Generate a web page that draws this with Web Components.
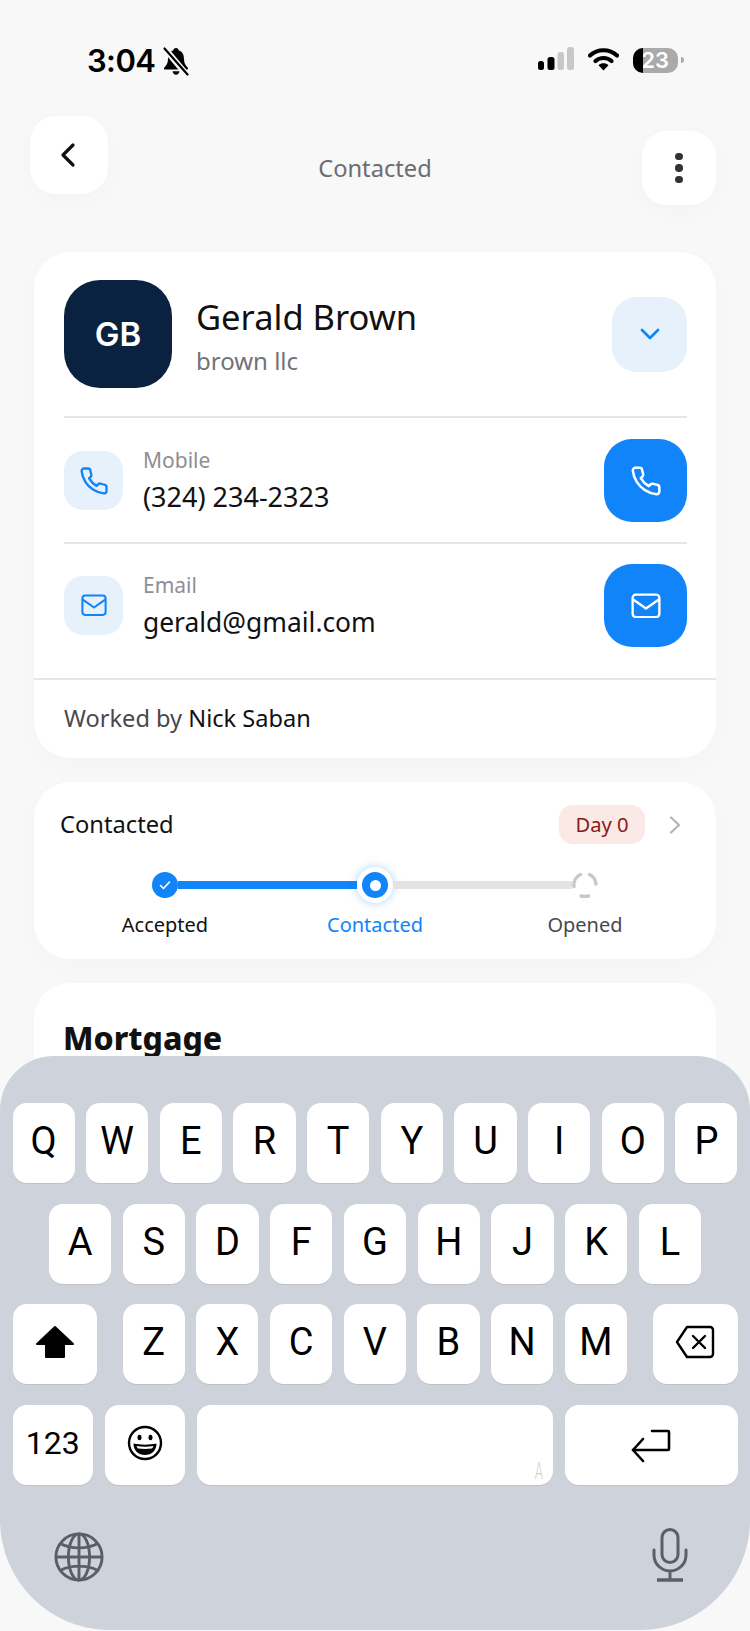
<!DOCTYPE html>
<html lang="en"><head><meta charset="utf-8"><title>Contacted</title>
<style>
html,body{margin:0;padding:0;background:#f8f8f8}
body{width:750px;height:1631px;overflow:hidden;font-family:"Noto Sans","Liberation Sans",sans-serif}
</style></head><body>
<app-screen>
  <status-bar></status-bar>
  <nav-header title="Contacted"></nav-header>
  <contact-card name="Gerald Brown" company="brown llc" initials="GB" worker="Nick Saban"></contact-card>
  <pipeline-card title="Contacted" day="Day 0"></pipeline-card>
  <mortgage-card slot="tail">Mortgage</mortgage-card>
  <ios-keyboard slot="keyboard"></ios-keyboard>
</app-screen>
<script>
const PHONE='<path d="M22 16.92v3a2 2 0 0 1-2.18 2 19.79 19.79 0 0 1-8.63-3.07 19.5 19.5 0 0 1-6-6 19.79 19.79 0 0 1-3.07-8.67A2 2 0 0 1 4.11 2h3a2 2 0 0 1 2 1.72 12.84 12.84 0 0 0 .7 2.81 2 2 0 0 1-.45 2.11L8.09 9.91a16 16 0 0 0 6 6l1.27-1.27a2 2 0 0 1 2.11-.45 12.84 12.84 0 0 0 2.81.7A2 2 0 0 1 22 16.92z"/>';
const MAIL='<rect x="1.500" y="1.500" width="25" height="21" rx="3"/><path d="M2 6l12 8.500L26 6"/>';
const def=(n,fn)=>customElements.define(n,class extends HTMLElement{
  connectedCallback(){ if(this.shadowRoot) return; this.attachShadow({mode:'open'}).innerHTML=fn(this); }
});

def('app-screen',()=>`<style>
:host{display:block;width:750px;height:1631px;overflow:hidden;background:#f8f8f8}
.scroll{height:1116px;overflow:hidden}
.kb{position:relative;margin-top:-60px}
</style>
<div class="scroll"><slot></slot><slot name="tail"></slot></div>
<div class="kb"><slot name="keyboard"></slot></div>`);

def('status-bar',()=>`<style>
:host{display:flex;align-items:flex-start;height:116px;box-sizing:border-box;padding:47px 66px 0 87px;color:#000}
.t{font:600 31px/28px Inter,sans-serif;letter-spacing:-.6px}
.bell{margin:0 0 0 8px}
.r{margin-left:auto;display:flex;align-items:flex-start}
.bat{position:relative;width:45px;height:25px;margin:1px 0 0 14px;border-radius:10px;background:#aaa;display:flex;align-items:center;justify-content:flex-end;box-sizing:border-box;padding-right:9px;color:#fff;font:600 22px/25px Inter,sans-serif}
.bat i{position:absolute;left:0;top:0;bottom:0;width:10px;background:#000;border-radius:10px 0 0 10px}
.nub{width:3px;height:6px;margin:10px 0 0 3px;background:#aaa;border-radius:0 3px 3px 0}
svg{display:block}
</style>
<div class="t">3:04</div>
<svg class="bell" width="26" height="29" viewBox="0 0 26 29"><path fill="#000" d="M13 1c1.600 0 2.600 1 2.800 2.400C19.800 4.600 21 8 21 12c0 4 1.500 6.400 3.600 8.400.9.900.3 2.100-1 2.100H2.400c-1.300 0-1.900-1.200-1-2.100C3.500 18.400 5 16 5 12c0-4 1.200-7.400 5.200-8.600C10.400 2 11.400 1 13 1z"/><path fill="#000" d="M9.500 24.200h7c-.4 2.100-1.800 3.600-3.500 3.600s-3.100-1.500-3.500-3.600z"/><path d="M3 3l20 24" stroke="#f8f8f8" stroke-width="6"/><path d="M1.500 1.500l23 26" stroke="#000" stroke-width="2.200" stroke-linecap="round"/></svg>
<div class="r">
<svg width="37" height="24" viewBox="0 0 37 24"><rect x="1" y="14" width="6" height="9" rx="2.500" fill="#000"/><rect x="10.500" y="10" width="7" height="13" rx="2.500" fill="#000"/><rect x="20.500" y="5" width="6.500" height="18" rx="2.500" fill="#c8c8c8"/><rect x="30" y="0" width="7" height="23" rx="2.500" fill="#c8c8c8"/></svg>
<svg style="margin-left:14px" width="31" height="24" viewBox="0 0 31 24"><path d="M2 8.500C9.500 1.500 21.500 1.500 29 8.500" fill="none" stroke="#000" stroke-width="4.200" stroke-linecap="round"/><path d="M7.500 14c4.500-4 11.500-4 16 0" fill="none" stroke="#000" stroke-width="4.200" stroke-linecap="round"/><path d="M10.500 18.200c3-2.600 7-2.600 10 0L15.500 23.500z" fill="#000"/></svg>
<div class="bat"><i></i>23</div><div class="nub"></div>
</div>`);

def('nav-header',el=>`<style>
:host{display:flex;align-items:flex-start;height:136px;box-sizing:border-box;padding:0 34px 0 30px}
.b{background:#fff;display:flex;align-items:center;justify-content:center;box-shadow:0 6px 24px rgba(0,0,0,.025);flex:none}
.back{width:78px;height:78px;border-radius:26px}
.more{width:74px;height:74px;border-radius:25px;margin-top:15px;gap:4px;flex-direction:column}
.more i{width:7.500px;height:7.500px;border-radius:50%;background:#333}
.t{flex:1;text-align:center;font-size:23.700px;line-height:30px;margin-top:37px;color:#6c6c73}
svg{display:block;transform:translateX(-1px)}
</style>
<div class="b back"><svg width="18" height="26" viewBox="0 0 18 26" fill="none" stroke="#111" stroke-width="3.200" stroke-linecap="round" stroke-linejoin="round"><path d="M14 3L4 13l10 10"/></svg></div>
<div class="t">${el.getAttribute('title')}</div>
<div class="b more"><i></i><i></i><i></i></div>`);

def('contact-row',el=>{const m=el.getAttribute('icon')==='mail',ic=m?MAIL:PHONE,vb=m?'0 0 28 24':'0 0 24 24';
return `<style>
:host{display:flex;align-items:center;padding:0 29px 0 30px}
.box{width:59px;height:59px;border-radius:19px;background:#e7f1fc;display:flex;align-items:center;justify-content:center;color:#1084f8;flex:none}
.tx{margin-left:20px;flex:1;padding-top:1px}
.l{font-size:21px;line-height:26px;color:#8e8e93}
.v{font-size:${m?26.400:27}px;line-height:36px;color:#111;margin-top:6px}
.btn{width:83px;height:83px;border-radius:28px;background:#1084f8;display:flex;align-items:center;justify-content:center;color:#fff;flex:none}
svg{display:block;fill:none;stroke:currentColor;stroke-width:${m?2.200:1.900};stroke-linejoin:round;stroke-linecap:round}
</style>
<div class="box"><svg width="${m?26:30}" height="${m?22.300:30}" viewBox="${vb}">${ic}</svg></div>
<div class="tx"><div class="l">${el.getAttribute('label')}</div><div class="v">${el.getAttribute('value')}</div></div>
<div class="btn"><svg width="${m?30:32}" height="${m?25.700:32}" viewBox="${vb}">${ic}</svg></div>`});

def('contact-card',el=>`<style>
:host{display:block;margin:0 34px;height:506px;background:#fff;border-radius:36px;box-shadow:0 8px 30px rgba(0,0,0,.02);overflow:hidden}
.head{display:flex;align-items:center;padding:28px 29px 28px 30px}
.av{width:108px;height:108px;border-radius:36px;background:#0a2240;color:#fff;display:flex;align-items:center;justify-content:center;font:600 33px/1 Inter,sans-serif;flex:none;padding-top:1px;box-sizing:border-box}
.n{margin:15px 0 0 25px;flex:1;align-self:flex-start}
.name{font-size:34.500px;line-height:44px;color:#111;margin-left:-1px}
.co{font-size:24px;line-height:30px;color:#727278;margin:7px 0 0 -1px}
.chev{width:75px;height:75px;border-radius:25px;background:#e7f1fc;display:flex;align-items:center;justify-content:center}
hr{border:0;height:2px;background:#e6e6e6;margin:0 29px 0 30px}
hr.full{margin:0}
.r1{padding:21px 0 20px}
.r2{padding:20px 0 31px}
.foot{padding:24px 30px 28px;font-size:23.600px;line-height:28px;color:#48484d}
.foot b{font-weight:400;color:#111}
svg{display:block}
</style>
<div class="head"><div class="av">${el.getAttribute('initials')}</div>
<div class="n"><div class="name">${el.getAttribute('name')}</div><div class="co">${el.getAttribute('company')}</div></div>
<div class="chev"><svg width="24" height="16" viewBox="0 0 24 16" fill="none" stroke="#1084f8" stroke-width="2.700" stroke-linecap="round" stroke-linejoin="round"><path d="M4 4l8 8 8-8"/></svg></div></div>
<hr>
<div class="r1"><contact-row icon="phone" label="Mobile" value="(324) 234-2323"></contact-row></div>
<hr>
<div class="r2"><contact-row icon="mail" label="Email" value="gerald@gmail.com"></contact-row></div>
<hr class="full">
<div class="foot">Worked by <b>${el.getAttribute('worker')}</b></div>`);

def('pipeline-step',el=>{const s=el.getAttribute('state');
const col={done:['transparent','#1084f8'],active:['#1084f8','#e3e3e3'],todo:['#e3e3e3','transparent']}[s];
const dot={
done:`<div class="dot"><svg width="26" height="26" viewBox="0 0 26 26"><circle cx="13" cy="13" r="13" fill="#1084f8"/><path d="M8.500 13.500l3 3L17.500 10" fill="none" stroke="#fff" stroke-width="1.600" stroke-linecap="round" stroke-linejoin="round"/></svg></div>`,
active:`<div class="act"><i></i></div>`,
todo:`<div class="dot"><svg width="26" height="26" viewBox="0 0 26 26" fill="none" stroke="#c8c8c8" stroke-width="3.400" stroke-linecap="round"><path d="M2 14.500A11.500 11.500 0 0 1 8.500 2.500"/><path d="M17.500 2.500A11.500 11.500 0 0 1 24 12"/><path d="M9 24c2.500.5 5 .5 7.500 0"/></svg></div>`}[s];
return `<style>
:host{display:block;flex:1}
.track{display:flex;align-items:center;height:36px}
.track b{flex:1;height:8px;display:block}
.dot{width:26px;height:26px;flex:none}
.act{width:36px;height:36px;box-sizing:border-box;border-radius:50%;background:#1084f8;border:5px solid #fff;box-shadow:0 0 10px rgba(16,132,248,.35);display:flex;align-items:center;justify-content:center;flex:none}
.act i{width:11px;height:11px;background:#fff;border-radius:50%;display:block}
svg{display:block}
.lb{margin-top:9px;text-align:center;font-size:20px;line-height:26px;color:${{done:'#111',active:'#1084f8',todo:'#48484d'}[s]}}
</style>
<div class="track"><b style="background:${col[0]}"></b>${dot}<b style="background:${col[1]}"></b></div>
<div class="lb">${el.getAttribute('label')}</div>`});

def('pipeline-card',el=>`<style>
:host{display:block;margin:24px 34px 0;height:177px;box-sizing:border-box;padding:23px 26px 0;background:#fff;border-radius:36px;box-shadow:0 8px 30px rgba(0,0,0,.02)}
.h{display:flex;align-items:center;height:39px}
.t{flex:1;font-size:23.700px;color:#111;margin-top:-2px}
.d{width:86px;height:39px;border-radius:14px;background:#fbe9e6;color:#8b1a1a;font-size:20.200px;line-height:38px;text-align:center}
svg{display:block;margin:0 9px 0 24px}
.s{display:flex;margin-top:23px}
</style>
<div class="h"><div class="t">${el.getAttribute('title')}</div><div class="d">${el.getAttribute('day')}</div>
<svg width="12" height="18" viewBox="0 0 12 18" fill="none" stroke="#b4b4b4" stroke-width="2.200" stroke-linecap="round" stroke-linejoin="round"><path d="M2 1.500L10 9l-8 7.500"/></svg></div>
<div class="s"><pipeline-step state="done" label="Accepted"></pipeline-step><pipeline-step state="active" label="Contacted"></pipeline-step><pipeline-step state="todo" label="Opened"></pipeline-step></div>`);

def('mortgage-card',()=>`<style>
:host{display:block;margin:24px 34px 0;height:200px;box-sizing:border-box;padding:35px 29px;background:#fff;border-radius:36px 36px 0 0}
div{font-size:32px;font-weight:800;line-height:40px;color:#111}
</style><div><slot></slot></div>`);

def('kb-key',el=>`<style>
:host{display:flex;align-items:center;justify-content:center;height:80px;background:#fff;border-radius:14px;box-shadow:0 1px 0 rgba(0,0,0,.08);color:#000;font:400 38px/1 Roboto,sans-serif;padding-bottom:4px;box-sizing:border-box;position:relative;flex:${el.getAttribute('w')?'none':'1'};width:${el.getAttribute('w')||'auto'};min-width:0}
</style><slot></slot>`);

const row=s=>[...s].map(c=>`<kb-key>${c}</kb-key>`).join('');
def('ios-keyboard',()=>`<style>
:host{display:block;height:574px;box-sizing:border-box;background:#ced2da;padding-top:47px;border-radius:54px 54px 110px 110px}
.r{display:flex;gap:11.600px;padding:0 12.500px;margin-bottom:20.700px}
.r2{padding:0 49px}
.sp{position:absolute;right:10px;bottom:2px;font:300 24px/24px Roboto,sans-serif;color:#cfcfcf;transform:scaleX(.55);transform-origin:right}
.s3{margin-right:14px}
.d3{margin-left:14px}
.kk{font-size:32px}
.b{display:flex;justify-content:space-between;padding:22px 62px 0 54px}
svg{display:block}
.ret{transform:translateY(3px)}
.glb{margin-top:4px}
</style>
<div class="r">${row('QWERTYUIOP')}</div>
<div class="r r2">${row('ASDFGHJKL')}</div>
<div class="r">
<kb-key w="84.500px" class="s3"><svg width="40" height="34" viewBox="0 0 40 34"><path fill="#000" stroke="#000" stroke-width="2" stroke-linejoin="round" d="M20 2L38 19H29V32H11V19H2z"/></svg></kb-key>
${row('ZXCVBNM')}
<kb-key w="85px" class="d3"><svg width="40" height="34" viewBox="0 0 40 34" fill="none" stroke="#000" stroke-width="2.400" stroke-linejoin="round" stroke-linecap="round"><path d="M12 2h23a3 3 0 0 1 3 3v24a3 3 0 0 1-3 3H12L2 17z"/><path d="M18 11l12 12M30 11L18 23"/></svg></kb-key>
</div>
<div class="r">
<kb-key w="80.500px" class="kk">123</kb-key>
<kb-key w="80.500px"><svg width="36" height="36" viewBox="0 0 36 36"><circle cx="18" cy="18" r="16" fill="none" stroke="#000" stroke-width="2.400"/><ellipse cx="12.500" cy="12.500" rx="2" ry="2.800"/><ellipse cx="23.500" cy="12.500" rx="2" ry="2.800"/><path d="M6.500 18.500c7 1.500 16 1.500 23 0 0 7-5 11.500-11.500 11.500S6.500 25.500 6.500 18.500z" fill="#000"/><path d="M9.500 21c5.500 1 11.500 1 17 0-.5 1.200-1 2-1.500 2.600-4.500.6-9.500.6-14 0-.5-.6-1-1.400-1.500-2.600z" fill="#fff"/></svg></kb-key>
<kb-key><span class="sp">A</span></kb-key>
<kb-key w="173px"><svg class="ret" width="40" height="34" viewBox="0 0 40 34" fill="none" stroke="#000" stroke-width="2.600" stroke-linecap="round" stroke-linejoin="round"><path d="M21 2h16a1 1 0 0 1 1 1v17a1 1 0 0 1-1 1H2"/><path d="M12 10L2 21l10 11"/></svg></kb-key>
</div>
<div class="b">
<svg class="glb" width="50" height="50" viewBox="0 0 52 52" fill="none" stroke="#5a5e66" stroke-width="3"><circle cx="26" cy="26" r="24"/><ellipse cx="26" cy="26" rx="11" ry="24"/><path d="M26 2v48M2 26h48M6.500 12c11 6 28 6 39 0M6.500 40c11-6 28-6 39 0"/></svg>
<svg width="36" height="54" viewBox="0 0 36 54" fill="none" stroke="#5a5e66" stroke-width="3" stroke-linecap="round"><rect x="10" y="1.500" width="16" height="33" rx="8"/><path d="M2 22v5a16 16 0 0 0 32 0v-5M18 43v8"/><path d="M5 52h26" stroke-width="3.500" stroke-linecap="butt"/></svg>
</div>`);
</script>
</body></html>
